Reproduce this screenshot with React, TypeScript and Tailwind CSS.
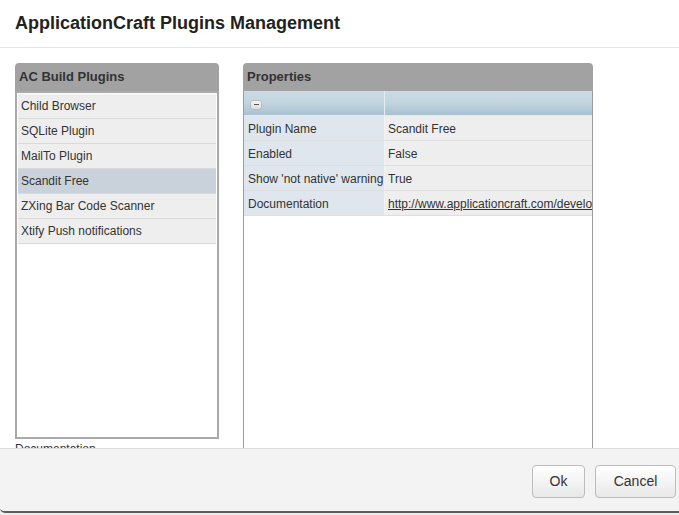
const plugins = [
  "Child Browser",
  "SQLite Plugin",
  "MailTo Plugin",
  "Scandit Free",
  "ZXing Bar Code Scanner",
  "Xtify Push notifications",
];

const properties = [
  { name: "Plugin Name", value: "Scandit Free" },
  { name: "Enabled", value: "False" },
  { name: "Show 'not native' warning", value: "True" },
  { name: "Documentation", value: "http://www.applicationcraft.com/developers/plugins/scandit", link: true },
];

export default function App() {
  return (
    <div className="w-[679px] h-[515px] bg-[#ececec] overflow-hidden font-['Liberation_Sans',Arial,sans-serif] text-[#333]">
      <div className="h-[513px] flex flex-col bg-white border-b-2 border-[#5c5c5c] rounded-bl-[5px] overflow-hidden">
        {/* Title */}
        <div className="h-[48px] shrink-0 border-b border-[#e5e5e5] px-[15px] flex items-center">
          <h1 className="text-[18px] font-bold text-[#222]">ApplicationCraft Plugins Management</h1>
        </div>

        {/* Body */}
        <div className="h-[400px] shrink-0 overflow-hidden flex items-start px-[15px] pt-[15px]">
          {/* AC Build Plugins */}
          <div className="w-[204px] shrink-0 flex flex-col">
            <div className="h-[28px] shrink-0 bg-[#a2a2a2] rounded-t-[4px] px-[4px] flex items-center text-[13px] font-bold text-[#333]">
              AC Build Plugins
            </div>
            <div className="h-[348px] shrink-0 border-2 border-[#a9a9a9] bg-white p-px">
              {plugins.map((p) => (
                <div
                  key={p}
                  className={
                    "h-[25px] border-b border-[#dadada] px-[3px] flex items-center text-[12px] " +
                    (p === "Scandit Free" ? "bg-[#c9d2da]" : "bg-[#eeeeee]")
                  }
                >
                  {p}
                </div>
              ))}
            </div>
            <div className="shrink-0 mt-[2px] text-[12px] leading-[16px]">Documentation</div>
          </div>

          {/* Properties */}
          <div className="w-[350px] h-[400px] shrink-0 ml-[24px] flex flex-col">
            <div className="h-[28px] shrink-0 bg-[#a2a2a2] rounded-t-[4px] px-[4px] flex items-center text-[13px] font-bold text-[#333]">
              Properties
            </div>
            <div className="flex-1 border-x border-[#9c9c9c] bg-white overflow-hidden">
              <div className="w-[420px]">
                <div className="h-[25px] flex bg-gradient-to-b from-[#cbdae3] via-[#c2d4de] to-[#a8c2d0] border-b border-[#e2e8ec]">
                  <div className="w-[141px] shrink-0 border-r border-[#e6edf1] flex items-center pl-[6px] pt-[3px]">
                    <span className="w-[12px] h-[10px] rounded-[3px] border border-[#b4bcc2] bg-gradient-to-b from-[#f6f6f6] to-[#dcdcdc] flex items-center justify-center">
                      <span className="w-[5px] h-px bg-[#555]" />
                    </span>
                  </div>
                  <div className="flex-1" />
                </div>
                {properties.map((r) => (
                  <div key={r.name} className="h-[25px] flex border-b border-[#dedede] text-[12px]">
                    <div className="w-[141px] shrink-0 bg-[#dfe6ed] border-r border-[#f2f2f2] pl-[4px] pt-px flex items-center whitespace-nowrap overflow-hidden">
                      {r.name}
                    </div>
                    <div className="flex-1 bg-[#eeeeee] pl-[3px] pt-px flex items-center whitespace-nowrap overflow-hidden">
                      {r.link ? <span className="underline">{r.value}</span> : r.value}
                    </div>
                  </div>
                ))}
              </div>
            </div>
          </div>
        </div>

        {/* Footer */}
        <div className="flex-1 bg-[#f3f3f3] border-t border-[#dddddd] flex items-center justify-end gap-[10px] pr-[3px] pt-[2px]">
          <button className="w-[53px] h-[33px] rounded-[4px] border border-[#bcbcbc] bg-gradient-to-b from-[#ffffff] to-[#e8e8e8] text-[14px] text-[#333]">
            Ok
          </button>
          <button className="w-[81px] h-[33px] rounded-[4px] border border-[#bcbcbc] bg-gradient-to-b from-[#ffffff] to-[#e8e8e8] text-[14px] text-[#333]">
            Cancel
          </button>
        </div>
      </div>
    </div>
  );
}
